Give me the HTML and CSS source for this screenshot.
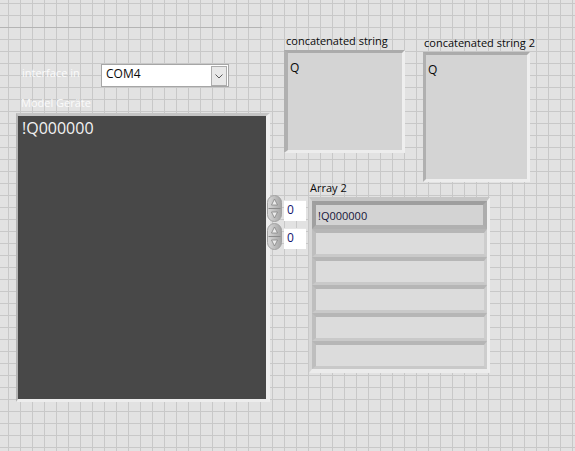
FILE: index.html
```html
<!DOCTYPE html>
<html lang="de">
<head>
<meta charset="utf-8">
<title>Front Panel</title>
<link rel="stylesheet" href="styles.css">
</head>
<body>
<div class="panel">
  <div class="ctl ctl-iface">
    <span class="label label-light iface-label">interface in</span>
    <div class="combo">
      <span class="combo-text">COM4</span>
      <span class="combo-btn">
        <svg width="8" height="5" viewBox="0 0 8 5"><path d="M0.5 0.5 L4 4 L7.5 0.5" fill="none" stroke="#5a5a5a" stroke-width="1"/></svg>
      </span>
    </div>
  </div>

  <div class="ctl ctl-model">
    <span class="label label-light model-label">Model Geräte</span>
    <div class="dark-str">
      <div class="dark-text">!Q000000</div>
    </div>
  </div>

  <div class="ctl ctl-cat1">
    <span class="label cat1-label">concatenated string</span>
    <div class="str-box box1"><span class="str-text">Q</span></div>
  </div>

  <div class="ctl ctl-cat2">
    <span class="label cat2-label">concatenated string 2</span>
    <div class="str-box box2"><span class="str-text">Q</span></div>
  </div>

  <div class="ctl ctl-array">
    <div class="indices">
      <div class="index">
        <svg class="spin" width="15" height="27" viewBox="0 0 15 27">
          <defs><linearGradient id="sg1" x1="0" x2="1" y1="0" y2="0"><stop offset="0" stop-color="#dadada"/><stop offset="1" stop-color="#a4a4a4"/></linearGradient></defs>
          <rect x="0.5" y="0.5" width="14" height="26" rx="7" fill="url(#sg1)" stroke="#a2a2a2"/>
          <line x1="1.5" y1="13.5" x2="13.5" y2="13.5" stroke="#8c8c8c"/>
          <path d="M7.5 4 L10.5 10 L4.5 10 Z" fill="#ececec" stroke="#858585" stroke-width="0.8"/>
          <path d="M7.5 23 L10.5 17 L4.5 17 Z" fill="#ececec" stroke="#858585" stroke-width="0.8"/>
        </svg>
        <div class="idx-box">0</div>
      </div>
      <div class="index">
        <svg class="spin" width="15" height="27" viewBox="0 0 15 27">
          <defs><linearGradient id="sg2" x1="0" x2="1" y1="0" y2="0"><stop offset="0" stop-color="#dadada"/><stop offset="1" stop-color="#a4a4a4"/></linearGradient></defs>
          <rect x="0.5" y="0.5" width="14" height="26" rx="7" fill="url(#sg2)" stroke="#a2a2a2"/>
          <line x1="1.5" y1="13.5" x2="13.5" y2="13.5" stroke="#8c8c8c"/>
          <path d="M7.5 4 L10.5 10 L4.5 10 Z" fill="#ececec" stroke="#858585" stroke-width="0.8"/>
          <path d="M7.5 23 L10.5 17 L4.5 17 Z" fill="#ececec" stroke="#858585" stroke-width="0.8"/>
        </svg>
        <div class="idx-box">0</div>
      </div>
    </div>
    <div class="array-col">
      <span class="label array-label">Array 2</span>
      <div class="arr-frame">
        <div class="elem sel">!Q000000</div>
        <div class="elem"></div>
        <div class="elem"></div>
        <div class="elem"></div>
        <div class="elem"></div>
        <div class="elem"></div>
      </div>
    </div>
  </div>
</div>
</body>
</html>
```

FILE: styles.css
```css
html, body {
  margin: 0;
  padding: 0;
}
body {
  font-family: "Open Sans", "Noto Sans", sans-serif;
  background: #e2e2e2;
}
.panel {
  position: relative;
  width: 575px;
  height: 451px;
  overflow: hidden;
  background-color: #e2e2e2;
  background-image:
    linear-gradient(#b4b4b4, #b4b4b4),
    linear-gradient(to right, #c8c8c8 1px, transparent 1px),
    linear-gradient(to bottom, #c8c8c8 1px, transparent 1px);
  background-size: 262px 1px, 12px 12px, 12px 12px;
  background-position: 0 27px, 8px 3px, 8px 3px;
  background-repeat: no-repeat, repeat, repeat;
}
.ctl {
  position: absolute;
  display: flex;
}
.label {
  font-size: 11px;
  line-height: 14px;
  color: #0a0a0a;
  white-space: nowrap;
}
.label-light {
  color: #fbfbfb;
}

/* interface in */
.ctl-iface {
  left: 22px;
  top: 64px;
  flex-direction: row;
  align-items: flex-start;
}
.iface-label {
  width: 79px;
  margin-top: 2px;
}
.combo {
  box-sizing: border-box;
  width: 128px;
  height: 23px;
  border: 1px solid #a6a6a6;
  background: #ffffff;
  display: flex;
  align-items: flex-start;
  justify-content: space-between;
}
.combo-text {
  font-size: 12px;
  line-height: 14px;
  color: #0a0a0a;
  padding: 2px 0 0 4px;
}
.combo-btn {
  box-sizing: border-box;
  width: 16px;
  height: 20px;
  margin: 1px 1px 0 0;
  border: 1px solid #acacac;
  background: #e8e8e8;
  display: flex;
  align-items: center;
  justify-content: center;
}

/* Model Geräte */
.ctl-model {
  left: 16px;
  top: 96px;
  flex-direction: column;
  gap: 3px;
}
.model-label {
  padding-left: 5px;
}
.dark-str {
  box-sizing: border-box;
  width: 254px;
  height: 289px;
  border-style: solid;
  border-width: 3px 4px 3px 2px;
  border-color: #c4c4c4 #efefef #ededed #b4b4b4;
  background: #484848;
}
.dark-text {
  font-size: 16px;
  line-height: 20px;
  color: #f2f2f2;
  padding: 2px 0 0 4px;
}

/* concatenated strings */
.ctl-cat1 {
  left: 284px;
  top: 34px;
  flex-direction: column;
  gap: 2px;
}
.cat1-label {
  padding-left: 2px;
}
.ctl-cat2 {
  left: 423px;
  top: 36px;
  flex-direction: column;
  gap: 2px;
}
.cat2-label {
  padding-left: 1px;
}
.str-box {
  box-sizing: border-box;
  border-style: solid;
  border-width: 3px 3px 3px 4px;
  border-color: #ababab #efefef #ededed #b0b0b0;
  background: #d4d4d4;
  padding: 2px 0 0 2px;
}
.box1 {
  width: 121px;
  height: 103px;
}
.box2 {
  width: 107px;
  height: 130px;
  border-left-width: 3px;
}
.str-text {
  font-size: 12px;
  line-height: 14px;
  color: #0a0a0a;
}

/* Array */
.ctl-array {
  left: 267px;
  top: 181px;
  flex-direction: row;
  align-items: flex-start;
  gap: 3px;
}
.indices {
  margin-top: 14px;
  display: flex;
  flex-direction: column;
  gap: 1px;
}
.index {
  display: flex;
  align-items: flex-start;
  gap: 2px;
}
.spin {
  display: block;
}
.idx-box {
  box-sizing: border-box;
  width: 22px;
  height: 21px;
  margin-top: 5px;
  background: #ffffff;
  border-top: 1px solid #e6e6e6;
  font-size: 12px;
  line-height: 18px;
  color: #14146e;
  padding-left: 3px;
}
.array-col {
  display: flex;
  flex-direction: column;
  gap: 2px;
}
.array-label {
  padding-left: 1px;
}
.arr-frame {
  width: 175px;
  border-style: solid;
  border-width: 4px 3px 4px 3px;
  border-color: #c6c6c6 #efefef #ececec #d6d6d6;
  display: flex;
  flex-direction: column;
}
.elem {
  box-sizing: border-box;
  height: 28px;
  border-style: solid;
  border-width: 4px 3px 3px 4px;
  border-color: #b6b6b6 #cdcdcd #c9c9c9 #bebebe;
  background: #dcdcdc;
  display: flex;
  align-items: center;
  font-size: 11px;
  color: #16163a;
}
.elem.sel {
  border-width: 4px;
  border-color: #9e9e9e #adadad #b0b0b0 #a0a0a0;
  background: #d3d3d3;
  padding-left: 2px;
}
```
